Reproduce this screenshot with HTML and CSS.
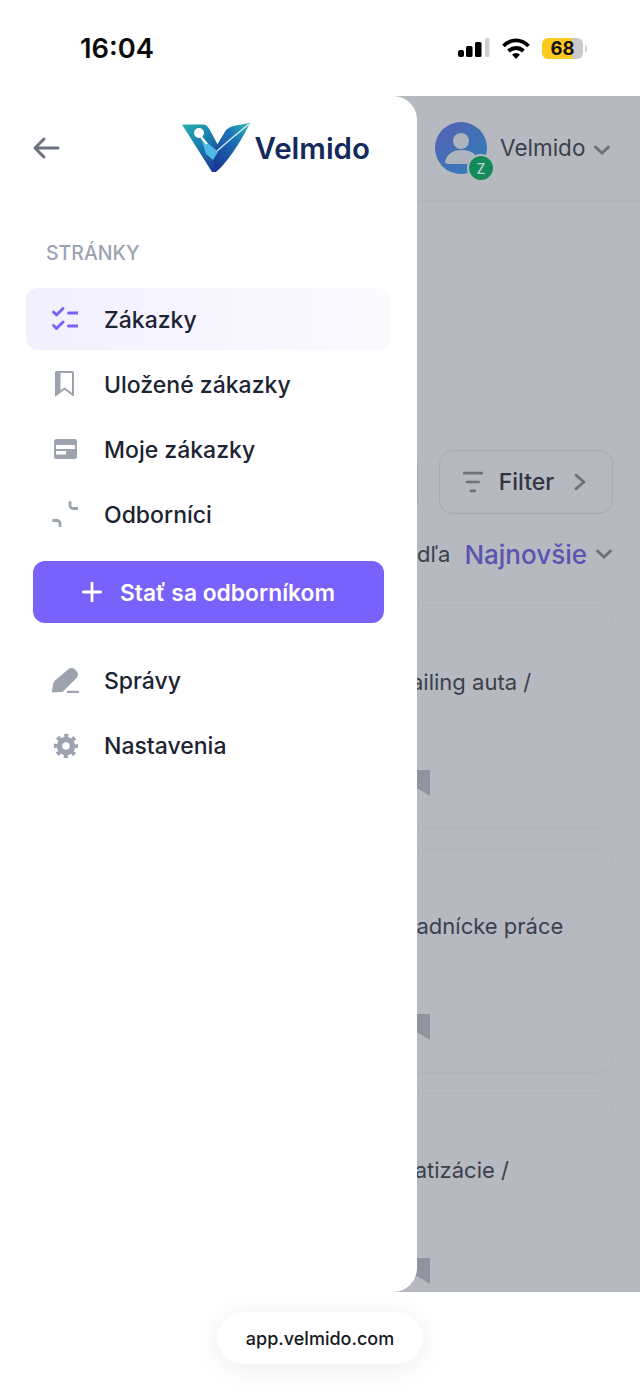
FILE: index.html
```html
<!DOCTYPE html>
<html lang="sk">
<head>
<meta charset="utf-8">
<title>Velmido</title>
<link rel="stylesheet" href="styles.css">
</head>
<body>
<header class="status">
  <span class="time">16:04</span>
  <div class="status-icons">
    <svg class="signal" width="32" height="20" viewBox="0 0 32 20"><rect x="0" y="12" width="6" height="7" rx="2" fill="#000"/><rect x="8" y="8" width="6.500" height="11" rx="1.500" fill="#000"/><rect x="17" y="4" width="6.500" height="15" rx="1.500" fill="#000"/><rect x="27" y="0" width="4.500" height="19" rx="1.500" fill="#cfcfcf"/></svg>
    <svg class="wifi" width="28" height="21" viewBox="0 0 28 21"><path d="M1.500 8C9 .5 19 .5 26.500 8" fill="none" stroke="#000" stroke-width="3.800"/><path d="M6.500 13C11 9 17 9 21.500 13" fill="none" stroke="#000" stroke-width="3.800"/><path d="M10 16.500 Q14 13.500 18 16.500 L14 21Z" fill="#000"/></svg>
    <div class="battery"><span class="battery-num">68</span></div>
    <span class="battery-nub"></span>
  </div>
</header>

<main class="screen">
  <div class="page">
    <div class="topbar">
      <div class="avatar">
        <svg width="52" height="52" viewBox="0 0 52 52"><defs><linearGradient id="av" x1="0" y1="0" x2="1" y2="1"><stop offset="0" stop-color="#5760b4"/><stop offset="1" stop-color="#2f80b8"/></linearGradient></defs><circle cx="26" cy="26" r="26" fill="url(#av)"/><circle cx="26" cy="19" r="8" fill="#aeb4bd"/><path d="M10 41c1-9 8-13 16-13s13 2 16 8l-6 6H13z" fill="#aeb4bd"/></svg>
        <span class="avatar-badge">Z</span>
      </div>
      <span class="user-name">Velmido</span>
      <svg class="chev" width="16" height="10" viewBox="0 0 16 10"><path d="M1.500 2l6.500 6 6.500-6" fill="none" stroke="#6d727d" stroke-width="3" stroke-linecap="round"/></svg>
    </div>

    <div class="filter-row">
      <div class="ghost-btn"></div>
      <div class="filter-btn">
        <svg width="20" height="22" viewBox="0 0 20 22"><path d="M1 2h18M4 11h12M8 20h4" stroke="#6d727d" stroke-width="2.600" fill="none" stroke-linecap="round"/></svg>
        <span class="filter-label">Filter</span>
        <svg width="12" height="18" viewBox="0 0 12 18"><path d="M2 2l8 7-8 7" fill="none" stroke="#6d727d" stroke-width="2.800" stroke-linecap="round"/></svg>
      </div>
    </div>

    <div class="sort-row">
      <span class="sort-label">Zoradiť podľa</span>
      <span class="sort-value">Najnovšie</span>
      <svg width="16" height="10" viewBox="0 0 16 10"><path d="M1.500 2l6.500 6 6.500-6" fill="none" stroke="#6d727d" stroke-width="3" stroke-linecap="round"/></svg>
    </div>

    <div class="cards">
      <article class="card">
        <p class="card-title card-title-a">Detailing auta /</p>
        <svg class="card-mark" width="30" height="27" viewBox="0 0 30 27"><path d="M3 0h27v26l-13-8L3 26z" fill="#8f94a0"/></svg>
      </article>
      <article class="card">
        <p class="card-title card-title-b">Záhradnícke práce</p>
        <svg class="card-mark" width="30" height="27" viewBox="0 0 30 27"><path d="M3 0h27v26l-13-8L3 26z" fill="#8f94a0"/></svg>
      </article>
      <article class="card">
        <p class="card-title card-title-c">Klimatizácie /</p>
        <svg class="card-mark" width="30" height="27" viewBox="0 0 30 27"><path d="M3 0h27v26l-13-8L3 26z" fill="#8f94a0"/></svg>
      </article>
    </div>
  </div>

  <aside class="drawer">
    <div class="drawer-head">
      <svg class="back" width="30" height="24" viewBox="0 0 30 24"><path d="M27 12H4M13 3l-9 9 9 9" fill="none" stroke="#6b7280" stroke-width="3" stroke-linecap="round" stroke-linejoin="round"/></svg>
      <div class="logo">
        <svg width="70" height="50" viewBox="0 0 70 50">
          <defs>
            <linearGradient id="la" x1="0" y1="0" x2="0.700" y2="1"><stop offset="0" stop-color="#25b0ad"/><stop offset="0.500" stop-color="#1a7fae"/><stop offset="1" stop-color="#1b3f95"/></linearGradient>
            <linearGradient id="lb" x1="1" y1="0" x2="0.200" y2="1"><stop offset="0" stop-color="#35c0ab"/><stop offset="0.400" stop-color="#1c72b8"/><stop offset="1" stop-color="#173a94"/></linearGradient>
          </defs>
          <path d="M1 1.500L23 1.500C26 2 28 5 30 9L39 26 33 49 31 49Z" fill="url(#la)"/>
          <path d="M69 0C56 2 49 3 45 7L33 27 33 49 35 49C45 41 60 19 69 0Z" fill="url(#lb)"/>
          <path d="M20 15L34 26 37 29 32 37 25 31Z" fill="#4db9e6"/>
          <path d="M36 28C46 19 57 10 68 1" fill="none" stroke="#d8f2f2" stroke-width="1.300"/>
          <path d="M20 14L26 21" stroke="#fff" stroke-width="2.200"/>
          <circle cx="18" cy="10" r="5" fill="#fff"/>
        </svg>
        <span class="logo-text">Velmido</span>
      </div>
    </div>

    <nav class="nav">
      <div class="nav-title">STRÁNKY</div>
      <a class="nav-item nav-item-active">
        <svg width="26" height="26" viewBox="0 0 26 26"><path d="M1.500 6l3 3L11 2.500M1.500 19.500l3 3L11 16" fill="none" stroke="#7961fb" stroke-width="2.900" stroke-linecap="round" stroke-linejoin="round"/><path d="M16.500 7h9M16.500 20h9" stroke="#7961fb" stroke-width="3" stroke-linecap="round"/></svg>
        <span>Zákazky</span>
      </a>
      <a class="nav-item">
        <svg width="26" height="26" viewBox="0 0 26 26"><path d="M5 0h3.500v20L3 26V2a2 2 0 0 1 2-2z" fill="#9ca3af"/><path d="M5 1h15a1 1 0 0 1 1 1v22l-8.500-6.500L4 24V2a1 1 0 0 1 1-1z" fill="none" stroke="#9ca3af" stroke-width="2" stroke-linejoin="round"/></svg>
        <span>Uložené zákazky</span>
      </a>
      <a class="nav-item">
        <svg width="26" height="26" viewBox="0 0 26 26"><rect x="2" y="3" width="23" height="20" rx="2.500" fill="#9ca3af"/><rect x="4" y="9" width="19" height="4" fill="#fff"/><rect x="4" y="15" width="10" height="3.500" fill="#fff"/></svg>
        <span>Moje zákazky</span>
      </a>
      <a class="nav-item">
        <svg width="26" height="26" viewBox="0 0 26 26"><path d="M18 1.500v3a3 3 0 0 0 3 3h4.500M1.500 19.500h3.500a3 3 0 0 1 3 3V26" fill="none" stroke="#9ca3af" stroke-width="2.800" stroke-linecap="round"/></svg>
        <span>Odborníci</span>
      </a>
      <button class="cta">
        <svg width="20" height="20" viewBox="0 0 20 20"><path d="M10 1v18M1 10h18" stroke="#fff" stroke-width="2.800" stroke-linecap="round"/></svg>
        <span>Stať sa odborníkom</span>
      </button>
      <a class="nav-item">
        <svg width="27" height="26" viewBox="0 0 27 26"><path d="M16 2.500a5 5 0 0 1 7 0l1.500 1.500a5 5 0 0 1 0 7L12 23.500c-1 1-2 1.500-4 1.500L1 25.500c-1 0-1-.5-1-1.500l1-6c0-2 1-3.500 2-4.500z" fill="#9ca3af"/><path d="M16 25h10" stroke="#9ca3af" stroke-width="2.400" stroke-linecap="round"/></svg>
        <span class="nav-text-narrow">Správy</span>
      </a>
      <a class="nav-item">
        <svg width="26" height="26" viewBox="0 0 26 26"><circle cx="14" cy="14" r="6.500" fill="none" stroke="#9ca3af" stroke-width="5.500"/><circle cx="14" cy="14" r="10.500" fill="none" stroke="#9ca3af" stroke-width="3.400" stroke-dasharray="4.120 4.120" stroke-dashoffset="2.060"/></svg>
        <span>Nastavenia</span>
      </a>
    </nav>
  </aside>
</main>

<footer class="browser">
  <div class="url">app.velmido.com</div>
</footer>
</body>
</html>
```

FILE: styles.css
```css
* { box-sizing: border-box; }
html, body { margin: 0; padding: 0; }
body {
  width: 640px;
  height: 1387px;
  overflow: hidden;
  background: #fff;
  font-family: Inter, "Liberation Sans", sans-serif;
  display: flex;
  flex-direction: column;
}

/* Status bar */
.status {
  height: 96px;
  flex: none;
  display: flex;
  justify-content: space-between;
  align-items: center;
  padding: 0 53px 0 80px;
}
.time { font-size: 27.300px; font-weight: 600; color: #0a0a0a; }
.status-icons { display: flex; align-items: center; }
.signal { margin-right: 12px; }
.wifi { margin-right: 12px; }
.battery {
  width: 41px;
  height: 21px;
  border-radius: 6px;
  background: linear-gradient(90deg, #fccb1d 0 73%, #c9c9c9 73%);
  display: flex;
  align-items: center;
  justify-content: center;
}
.battery-num { font-size: 18.500px; font-weight: 700; color: #111; }
.battery-nub { width: 2px; height: 7px; margin-left: 2px; background: #d0d0d0; border-radius: 0 2px 2px 0; }

/* Screen */
.screen {
  height: 1196px;
  flex: none;
  position: relative;
  overflow: hidden;
  background: #b6b9bf;
}
.page { height: 100%; }
.topbar {
  height: 105px;
  display: flex;
  align-items: center;
  border-bottom: 1px solid #b1b4bb;
  padding: 0 27px 0 435px;
}
.avatar { width: 52px; height: 52px; position: relative; flex: none; }
.avatar svg { display: block; }
.avatar-badge {
  position: absolute;
  right: -8px;
  bottom: -8px;
  width: 28px;
  height: 28px;
  border-radius: 50%;
  background: #128a5c;
  border: 2px solid #b6b9bf;
  color: #b9d6c9;
  font-size: 14px;
  font-weight: 500;
  display: flex;
  align-items: center;
  justify-content: center;
}
.user-name { font-size: 22.500px; color: #3a404d; margin: 0 0 2px 13px; }
.chev { margin-left: 9px; margin-top: 4px; }

.filter-row {
  display: flex;
  justify-content: flex-end;
  gap: 21px;
  padding: 0 27px 0 0;
  margin-top: 249px;
}
.ghost-btn { width: 200px; height: 64px; border: 1.500px solid #a9adb5; border-radius: 12px; }
.filter-btn {
  width: 174px;
  height: 64px;
  border: 1.500px solid #a6aab6;
  border-radius: 14px;
  display: flex;
  align-items: center;
  padding: 0 26px 0 23px;
}
.filter-label { font-size: 23px; font-weight: 450; color: #2e3441; margin-left: 16px; margin-right: 20px; }

.sort-row {
  display: flex;
  justify-content: flex-end;
  align-items: center;
  height: 40px;
  margin-top: 20px;
  padding-right: 28px;
}
.sort-label { font-size: 22px; color: #3a404d; margin-right: 14px; }
.sort-value { font-size: 26px; font-weight: 450; color: #5a54b2; margin-right: 9px; }

.cards {
  display: flex;
  flex-direction: column;
  gap: 20px;
  margin: 31px 26px 0;
}
.card {
  height: 224px;
  flex: none;
  border: 1.500px solid #b1b4bb;
  border-radius: 16px;
  padding-top: 60px;
  position: relative;
}
.card-title { margin: 0; font-size: 22px; line-height: 32px; color: #3a404d; white-space: nowrap; }
.card-title-a { padding-left: 348px; }
.card-title-b { padding-left: 342px; }
.card-title-c { padding-left: 343px; }
.card-mark { display: block; margin: 72px 0 0 373px; }

/* Drawer */
.drawer {
  position: absolute;
  top: 0;
  left: 0;
  bottom: 0;
  width: 417px;
  background: #fff;
  border-radius: 0 24px 24px 0;
}
.drawer-head {
  height: 105px;
  display: flex;
  align-items: center;
  justify-content: space-between;
  padding: 0 47px 2px 31px;
}
.back { display: block; }
.logo { display: flex; align-items: center; }
.logo svg { display: block; }
.logo-text { font-size: 29.500px; font-weight: 600; color: #14295c; margin-left: 3px; }

.nav { padding: 0 27px 0 26px; }
.nav-title {
  font-size: 19.500px;
  font-weight: 450;
  color: #9ca3af;
  padding-left: 20px;
  margin-top: 40px;
  height: 47px;
  line-height: 24px;
}
.nav-item {
  height: 62px;
  margin-bottom: 3px;
  border-radius: 12px;
  display: flex;
  align-items: center;
  gap: 26px;
  padding-left: 26px;
  font-size: 23px;
  font-weight: 450;
  color: #1c2333;
}
.nav-item svg { flex: none; display: block; }
.nav-item span { margin-top: 2px; }
.nav-text-narrow { margin-left: -1px; }
.nav-item-active { background: linear-gradient(90deg, #f2f0fe, #fbfaff); }
.cta {
  width: 351px;
  height: 62px;
  margin: 16px 0 26px 7px;
  border: 0;
  border-radius: 12px;
  background: #7961fb;
  color: #fff;
  font: 600 22.800px Inter, "Liberation Sans", sans-serif;
  display: flex;
  align-items: center;
  justify-content: center;
  gap: 18px;
}

/* Browser pill */
.browser {
  flex: 1;
  display: flex;
  justify-content: flex-start;
  padding: 20px 0 0 217px;
}
.url {
  width: 206px;
  height: 52px;
  border-radius: 26px;
  background: #fff;
  box-shadow: 0 4px 28px rgba(0, 0, 0, 0.07);
  display: flex;
  align-items: center;
  justify-content: center;
  font-size: 18px;
  font-weight: 450;
  color: #17191d;
}
```
